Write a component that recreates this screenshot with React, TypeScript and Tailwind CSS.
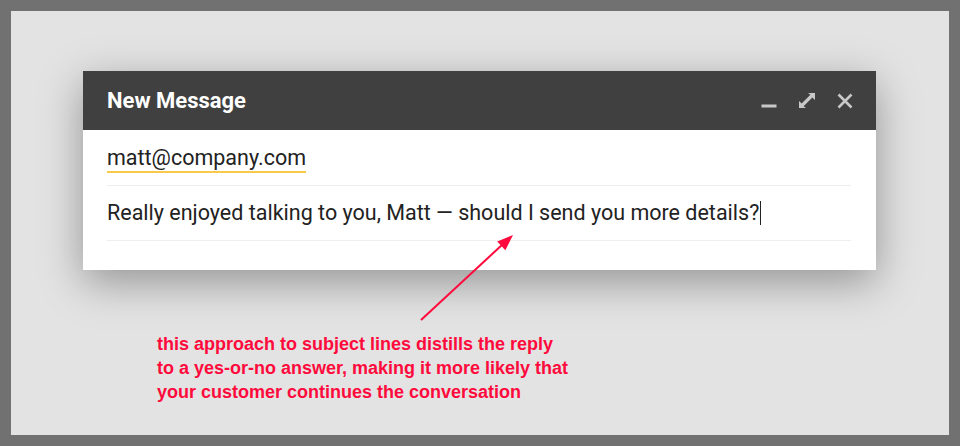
export default function App() {
  return (
    <div className="relative h-[446px] w-[960px] bg-[#717171] p-[11px]">
      <div className="h-full w-full bg-[#e3e3e3] pl-[72px] pt-[60px]">
        {/* compose window */}
        <div className="w-[793px] bg-white font-['Roboto',sans-serif] shadow-[0_12px_40px_rgba(0,0,0,0.35)]">
          <div className="flex h-[59px] items-center justify-between bg-[#404040] pl-6 pr-[23px]">
            <span className="text-[22px] font-bold text-white">New Message</span>
            <div className="flex items-center gap-[21px] text-[#c8c8c8]">
              <svg width="16" height="16" viewBox="0 0 16 16" aria-hidden>
                <rect x="0.5" y="11.5" width="15" height="3" fill="currentColor" />
              </svg>
              <svg width="18" height="18" viewBox="0 0 18 18" aria-hidden fill="currentColor">
                <path d="M10 1h7v7l-2.6-2.6-8.8 8.8L8 16H1V9l2.6 2.6 8.8-8.8z" />
              </svg>
              <svg width="16" height="16" viewBox="0 0 16 16" aria-hidden>
                <path d="M1.5 1.5l13 13M14.5 1.5l-13 13" stroke="currentColor" strokeWidth="2.6" />
              </svg>
            </div>
          </div>
          <div className="pl-6 pr-[25px] pb-[29px] text-[21.5px] text-[#222222]">
            <div className="flex h-[56px] items-end border-b border-[#eeeeee] pb-[12px]">
              <span className="border-b-2 border-[#f8c94a] leading-[26px]">matt@company.com</span>
            </div>
            <div className="flex h-[55px] items-center border-b border-[#eeeeee]">
              <span>Really enjoyed talking to you, Matt — should I send you more details?</span>
              <span className="ml-px h-[24px] w-px bg-[#222222]" />
            </div>
          </div>
        </div>

        <p className="ml-[74px] mt-[62px] font-['Liberation_Sans',Arial,sans-serif] text-[18px] font-bold leading-[24px] text-[#ff0a3c]">
          this approach to subject lines distills the reply
          <br />
          to a yes-or-no answer, making it more likely that
          <br />
          your customer continues the conversation
        </p>
      </div>

      {/* annotation arrow */}
      <svg className="pointer-events-none absolute left-0 top-0" width="960" height="446" aria-hidden>
        <line x1="421" y1="320" x2="503" y2="244" stroke="#ff0a3c" strokeWidth="2" />
        <polygon points="513,235 505.4,250.3 497.2,241.5" fill="#ff0a3c" />
      </svg>
    </div>
  )
}
